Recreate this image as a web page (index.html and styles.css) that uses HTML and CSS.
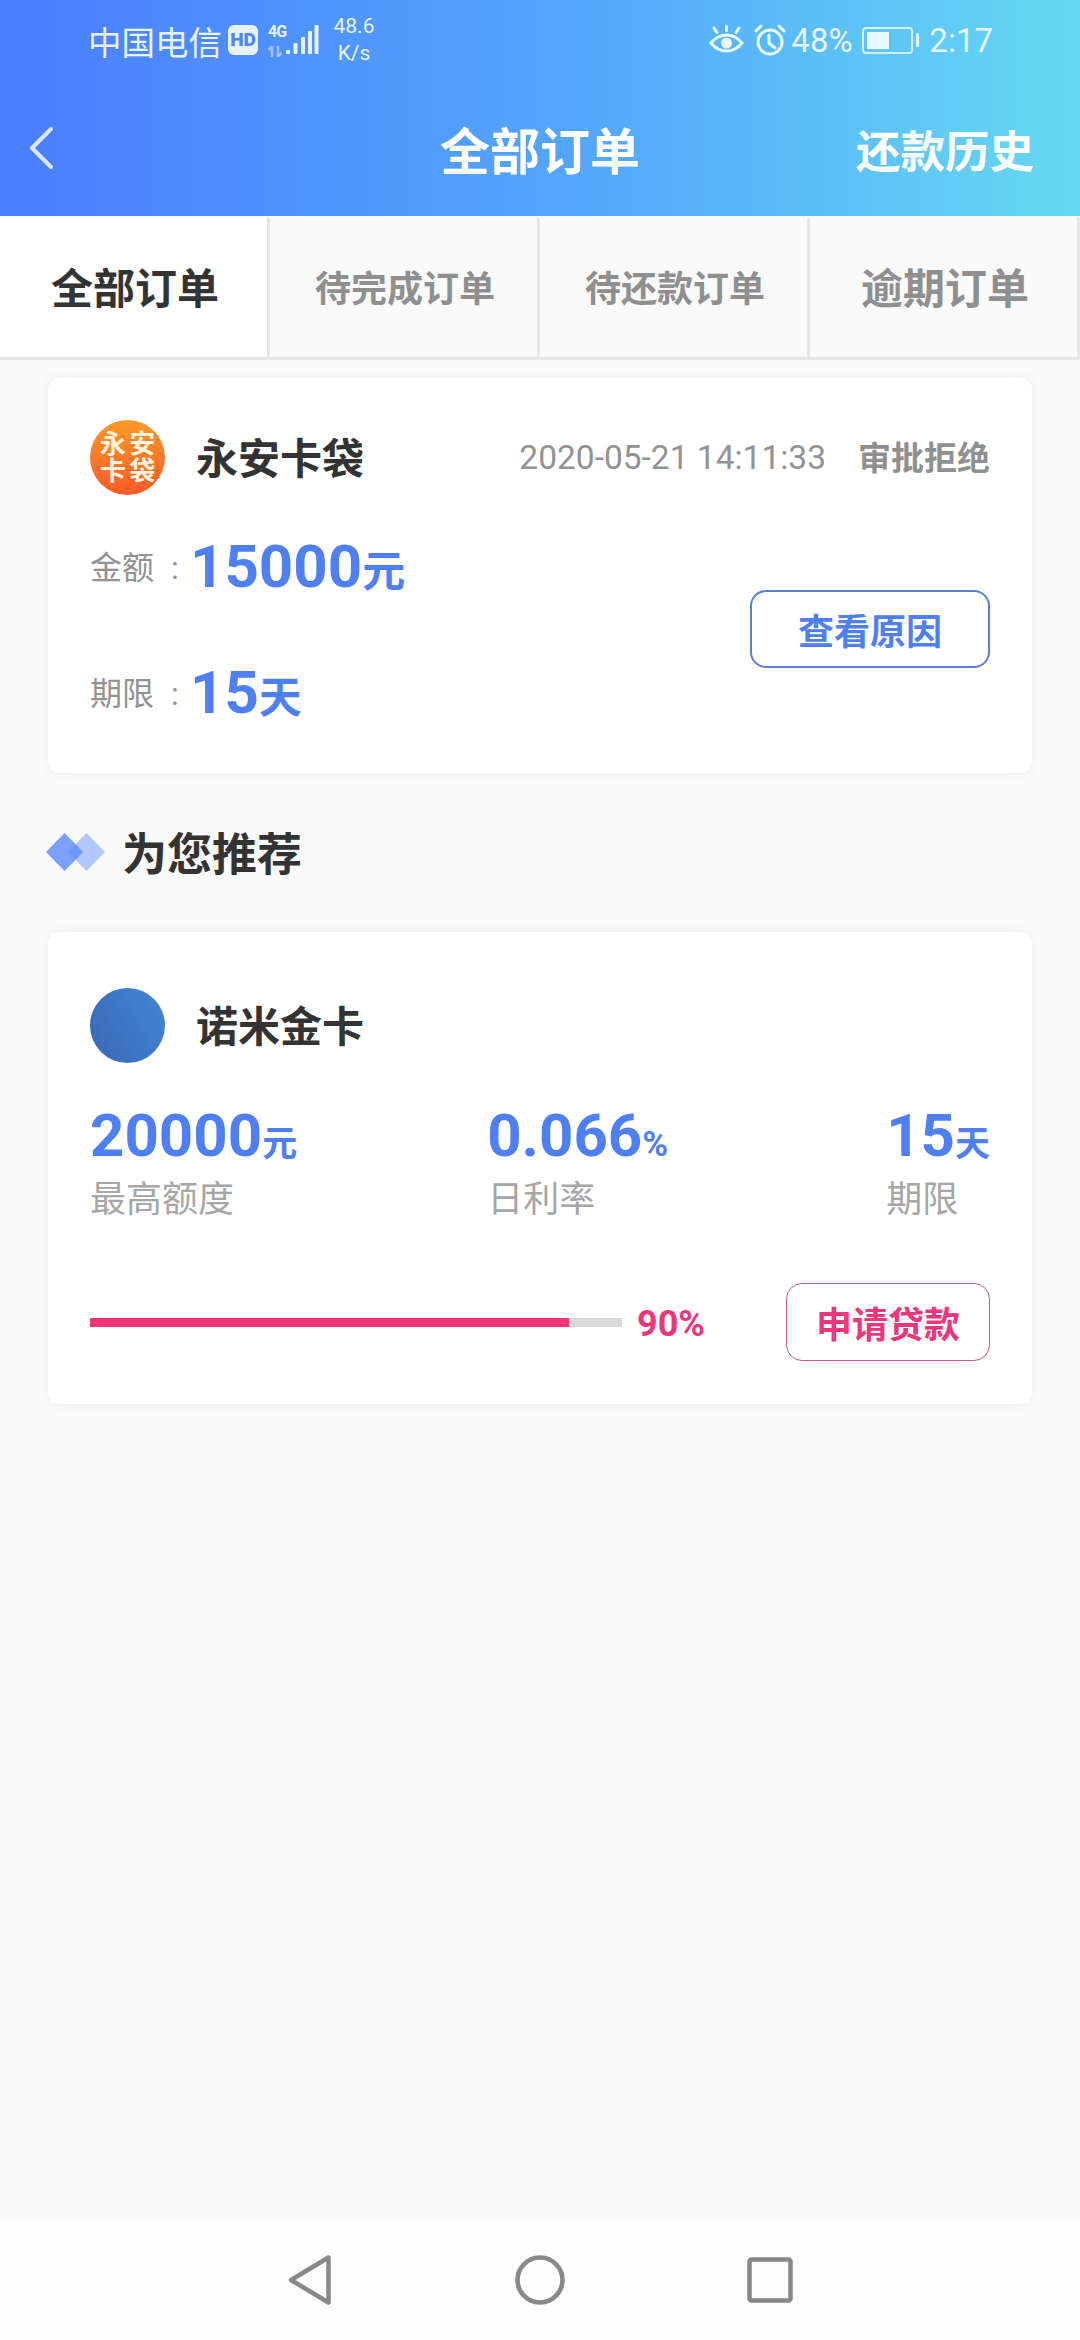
FILE: index.html
```html
<!DOCTYPE html>
<html lang="zh-CN">
<head>
    <meta charset="UTF-8">
    <meta name="viewport" content="width=device-width, initial-scale=1.0">
    <title>全部订单</title>
    <link rel="stylesheet" href="styles.css">
</head>
<body>
    <header class="top">
        <div class="status">
            <span class="carrier">中国电信</span>
            <span class="hd">HD</span>
            <span class="net">
                <span class="net-type">4G</span>
                <svg class="net-arrows" width="14" height="11" viewBox="0 0 14 11"><path d="M4 0v11M0.500 4L4 0.500M10 0v11M13.500 7L10 10.500" fill="none" stroke="#fff" stroke-opacity=".45" stroke-width="2.500"/></svg>
            </span>
            <svg class="signal" width="33" height="30" viewBox="0 0 33 30"><g fill="#e8f1ff"><rect x="0" y="25" width="4" height="4" rx="1"/><rect x="7.500" y="18" width="4" height="11" rx="1"/><rect x="15" y="12" width="4" height="17" rx="1"/><rect x="22" y="6" width="4" height="23" rx="1"/><rect x="28.500" y="0" width="4" height="29" rx="1"/></g></svg>
            <span class="speed">48.6<br>K/s</span>
            <span class="status-gap"></span>
            <svg class="eye" width="35" height="30" viewBox="0 0 35 30"><g fill="none" stroke="#e8faff" stroke-width="3" stroke-linecap="round"><path d="M2 18c4-5 9-8 15.500-8S29 13 33 18c-4 5-9 8-15.500 8S6 23 2 18z"/><path d="M17.500 1.500v4M5 3l3 4.500M30 3l-3 4.500"/></g><circle cx="17.500" cy="18" r="5.500" fill="#e8faff"/></svg>
            <svg class="clock" width="32" height="32" viewBox="0 0 32 32"><g fill="none" stroke="#e8faff" stroke-width="3" stroke-linecap="round"><circle cx="16" cy="18" r="12"/><path d="M15 11v8l6 5M2 7l5-5M30 7l-5-5"/></g></svg>
            <span class="battery-pct">48%</span>
            <span class="battery"><span class="battery-fill"></span></span>
            <span class="battery-nub"></span>
            <span class="time">2:17</span>
        </div>
        <div class="title-bar">
            <svg class="back" width="24" height="44" viewBox="0 0 24 44"><path d="M22 3L3 22l19 19" fill="none" stroke="#dbe6ff" stroke-width="4" stroke-linecap="round" stroke-linejoin="round"/></svg>
            <h1 class="title">全部订单</h1>
            <span class="history">还款历史</span>
        </div>
    </header>

    <nav class="tabs">
        <div class="tab tab-on">全部订单</div>
        <div class="tab">待完成订单</div>
        <div class="tab">待还款订单</div>
        <div class="tab tab-big">逾期订单</div>
    </nav>

    <main class="content">
        <section class="card order">
            <div class="card-head">
                <div class="logo logo-orange">
                    <span>永</span><span>安</span><span>卡</span><span>袋</span>
                </div>
                <span class="name">永安卡袋</span>
                <span class="date">2020-05-21 14:11:33</span>
                <span class="state">审批拒绝</span>
            </div>
            <div class="order-body">
                <div class="order-info">
                    <div class="info-row">
                        <span class="info-label">金额 :</span>
                        <p class="info-val"><span class="num">15000</span><span class="unit">元</span></p>
                    </div>
                    <div class="info-row">
                        <span class="info-label">期限 :</span>
                        <p class="info-val"><span class="num">15</span><span class="unit">天</span></p>
                    </div>
                </div>
                <button type="button" class="btn btn-blue">查看原因</button>
            </div>
        </section>

        <h2 class="section-title">
            <svg class="diamonds" width="60" height="38" viewBox="0 0 60 38">
                <path d="M40.500 0L59 19 40.500 38 22 19z" fill="#b4c8fd"/>
                <path d="M18.500 0L37 19 18.500 38 0 19z" fill="#5d8aff" fill-opacity=".8"/>
            </svg>
            为您推荐
        </h2>

        <section class="card product">
            <div class="card-head">
                <div class="logo logo-blue"></div>
                <span class="name">诺米金卡</span>
            </div>
            <div class="stats">
                <div class="stat">
                    <p class="stat-val"><span class="num">20000</span><span class="stat-unit">元</span></p>
                    <p class="stat-label">最高额度</p>
                </div>
                <div class="stat">
                    <p class="stat-val"><span class="num">0.066</span><span class="stat-unit">%</span></p>
                    <p class="stat-label">日利率</p>
                </div>
                <div class="stat">
                    <p class="stat-val"><span class="num">15</span><span class="stat-unit">天</span></p>
                    <p class="stat-label">期限</p>
                </div>
            </div>
            <div class="apply">
                <div class="bar"><div class="bar-fill" style="width: 90%"></div></div>
                <span class="percent">90%</span>
                <button type="button" class="btn btn-pink">申请贷款</button>
            </div>
        </section>
    </main>

    <footer class="navbar">
        <svg width="46" height="54" viewBox="0 0 46 54"><path d="M41.500 4.500L4 27l37.500 22.500z" fill="none" stroke="#888" stroke-width="4.500" stroke-linejoin="round"/></svg>
        <svg width="50" height="50" viewBox="0 0 50 50"><circle cx="25" cy="25" r="22.500" fill="none" stroke="#888" stroke-width="4.500"/></svg>
        <svg width="46" height="46" viewBox="0 0 46 46"><rect x="2.500" y="2.500" width="41" height="41" rx="2" fill="none" stroke="#888" stroke-width="4.500"/></svg>
    </footer>
</body>
</html>
```

FILE: styles.css
```css
/* Pagina de pedidos */
* {
    box-sizing: border-box;
}

body {
    width: 1080px;
    height: 2340px;
    margin: 0;
    display: flex;
    flex-direction: column;
    font-family: Roboto, "Noto Sans CJK SC", sans-serif;
    background-color: #fafafa;
    color: #333333;
}

p,
h1,
h2 {
    margin: 0;
}

/* Cabecera */
.top {
    height: 216px;
    background: linear-gradient(90deg, #4a7dff 0%, #54a8fc 55%, #65d9f1 100%);
    color: #ffffff;
}

.status {
    height: 80px;
    padding: 0 87px 0 88px;
    display: flex;
    align-items: center;
    color: #e8f4ff;
}

.carrier {
    font-size: 33.5px;
    width: 140px;
}

.hd {
    width: 30px;
    height: 30px;
    border-radius: 6px;
    background-color: #e8f1ff;
    color: #4c86fe;
    font-size: 19px;
    font-weight: 900;
    line-height: 30px;
    text-align: center;
}

.net {
    width: 18px;
    margin-left: 10px;
    display: flex;
    flex-direction: column;
    align-items: flex-start;
    gap: 6px;
}

.net-type {
    font-size: 16px;
    font-weight: 700;
    line-height: 16px;
    letter-spacing: -1px;
}

.speed {
    width: 60px;
    margin-left: 5px;
    font-size: 21px;
    line-height: 27px;
    text-align: center;
}

.status-gap {
    flex: 1;
}

.clock {
    margin-left: 10px;
}

.battery-pct {
    margin-left: 5px;
    font-size: 33px;
    width: 71px;
}

.battery {
    width: 51px;
    height: 27px;
    padding: 3px;
    border: 2px solid #d4f0ff;
    border-radius: 4px;
}

.battery-fill {
    display: block;
    width: 22px;
    height: 100%;
    background-color: #e8f9ff;
}

.battery-nub {
    width: 3px;
    height: 14px;
    margin-left: 3px;
    border-radius: 2px;
    background-color: #e8f9ff;
}

.time {
    margin-left: 10px;
    font-size: 33px;
}

.title-bar {
    height: 136px;
    padding: 0 29px;
    display: grid;
    grid-template-columns: 1fr auto 1fr;
    align-items: center;
}

.title {
    font-size: 50px;
    font-weight: 700;
}

.history {
    justify-self: end;
    margin-right: 17px;
    font-size: 44.5px;
    font-weight: 700;
}

/* Pestanas */
.tabs {
    height: 142px;
    margin-top: 2px;
    display: flex;
    border-bottom: 3px solid #e6e6e6;
}

.tab {
    width: 270px;
    padding: 0 0 4px 3px;
    display: flex;
    align-items: center;
    justify-content: center;
    border-right: 3px solid #e6e6e6;
    font-size: 36px;
    font-weight: 700;
    color: #8f8f8f;
}

.tab-on {
    background-color: #ffffff;
    color: #333333;
    font-size: 42px;
}

.tab-big {
    font-size: 42px;
}

/* Tarjetas */
.content {
    flex: 1;
    padding: 18px 48px 0;
}

.card {
    padding: 42px 42px 0;
    background-color: #ffffff;
    border-radius: 12px;
    box-shadow: 0 0 12px 0 rgba(0, 0, 0, 0.06);
}

.order {
    height: 395px;
}

.product {
    height: 472px;
    padding-top: 56px;
}

.card-head {
    display: flex;
    align-items: center;
}

.logo {
    width: 75px;
    height: 75px;
    border-radius: 50%;
    flex-shrink: 0;
}

.logo-orange {
    padding: 11px 8px;
    display: grid;
    grid-template-columns: 1fr 1fr;
    place-items: center;
    background: linear-gradient(180deg, #fb9a28 0%, #fb5a28 100%);
    color: #fff4dc;
    font-size: 26px;
    font-weight: 700;
    line-height: 27px;
}

.logo-blue {
    background: linear-gradient(60deg, #3869b4 0%, #4386d6 100%);
}

.name {
    margin-left: 31px;
    padding-bottom: 4px;
    font-size: 42px;
    font-weight: 700;
}

.date {
    margin-left: auto;
    font-size: 33.500px;
    color: #929292;
}

.state {
    margin-left: 32px;
    padding-bottom: 3px;
    font-size: 33px;
    font-weight: 700;
    color: #8f8f8f;
}

.order-body {
    display: flex;
    align-items: center;
    justify-content: space-between;
}

.order-info {
    padding-top: 8px;
}

.info-row {
    height: 126px;
    display: flex;
    align-items: center;
}

.info-label {
    width: 100px;
    padding-bottom: 2px;
    font-size: 32px;
    word-spacing: 9px;
    color: #929292;
}

.info-val {
    color: #4f7ff5;
    font-weight: 700;
}

.num {
    font-size: 60px;
    font-weight: 700;
    color: #4f7ff5;
}

.unit {
    font-size: 43px;
}

.btn {
    padding: 0;
    height: 78px;
    background-color: #ffffff;
    font-family: inherit;
    font-size: 36px;
    font-weight: 700;
    border-radius: 16px;
}

.btn-blue {
    width: 240px;
    margin-top: 8px;
    border: 2px solid #5a80d2;
    color: #4f7ff5;
}

.btn-pink {
    width: 204px;
    border: 1.5px solid #c85a8c;
    color: #f0357a;
}

/* Recomendados */
.section-title {
    height: 159px;
    padding-bottom: 2px;
    display: flex;
    align-items: center;
    margin-left: -2px;
    gap: 16px;
    font-size: 45px;
    font-weight: 700;
}

.stats {
    margin-top: 37px;
    display: flex;
    justify-content: space-between;
}

.stat-val {
    height: 78px;
    color: #4f7ff5;
    font-weight: 700;
}

.stat-unit {
    font-size: 35px;
}

.stat-label {
    font-size: 36px;
    line-height: 44px;
    color: #a6a6a6;
}

.stat:nth-child(2) {
    margin-right: 28px;
}

.apply {
    margin-top: 61px;
    display: flex;
    align-items: center;
}

.bar {
    width: 532px;
    height: 9px;
    background-color: #d9d9d9;
}

.bar-fill {
    height: 100%;
    background-color: #f73476;
}

.percent {
    margin-left: 15px;
    padding-top: 4px;
    font-size: 36px;
    font-weight: 700;
    color: #f0357a;
}

.apply .btn {
    margin-left: auto;
}

/* Barra de navegacion */
.navbar {
    height: 120px;
    display: flex;
    align-items: center;
    justify-content: center;
    gap: 182px;
    background-color: #fdfdfd;
}
```
